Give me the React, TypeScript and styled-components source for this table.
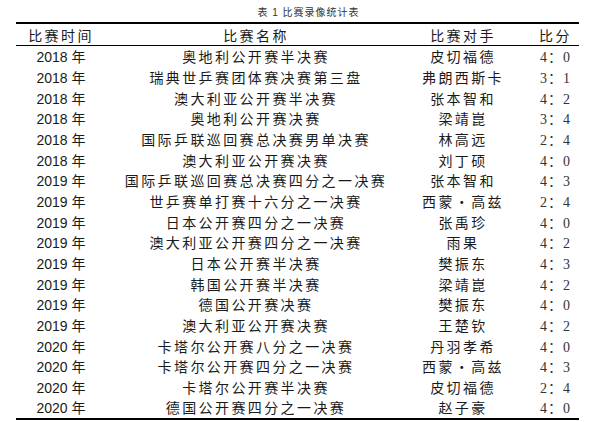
import React from "react";
import styled, { createGlobalStyle } from "styled-components";

const Global = createGlobalStyle`
  html, body { margin: 0; padding: 0; background: #fff; }
  body { font-family: "Liberation Sans", "Noto Sans CJK SC", sans-serif; color: #111; }
`;

const Page = styled.div`
  width: 601px;
  height: 422px;
  padding: 0 22px 0 16px;
  box-sizing: border-box;
`;

const Caption = styled.div`
  height: 22px;
  display: flex;
  align-items: center;
  justify-content: center;
  padding-left: 22px;
  font-family: "Liberation Sans", "Noto Sans CJK SC", sans-serif;
  font-size: 10px;
  letter-spacing: 1px;
  color: #333;
`;

const Table = styled.div`
  border-top: 2px solid #000;
  border-bottom: 2px solid #000;
  display: grid;
  grid-template-columns: 90px 300px 114px 59px;
`;

const Cell = styled.div<{ $head?: boolean; $score?: boolean }>`
  height: ${(p) => (p.$head ? "21px" : "20.67px")};
  display: flex;
  align-items: center;
  justify-content: center;
  padding-left: ${(p) => (p.$score ? "12px" : "0")};
  font-family: ${(p) =>
    p.$score
      ? '"Liberation Serif", "Noto Sans CJK SC", serif'
      : '"Liberation Sans", "Noto Sans CJK SC", sans-serif'};
  font-size: 14px;
  letter-spacing: ${(p) => (p.$score ? "1px" : "2.4px")};
  color: ${(p) => (p.$score ? "#333" : "#1a1a1a")};
  border-bottom: ${(p) => (p.$head ? "1px solid #000" : "none")};
  white-space: nowrap;
`;

const Year = styled.span`
  letter-spacing: 0;
  & > b {
    font-weight: normal;
    margin-left: 4px;
    font-family: "Noto Sans CJK SC", sans-serif;
  }
`;

const rows: [string, string, string, string][] = [
  ["2018", "奥地利公开赛半决赛", "皮切福德", "4：0"],
  ["2018", "瑞典世乒赛团体赛决赛第三盘", "弗朗西斯卡", "3：1"],
  ["2018", "澳大利亚公开赛半决赛", "张本智和", "4：2"],
  ["2018", "奥地利公开赛决赛", "梁靖崑", "3：4"],
  ["2018", "国际乒联巡回赛总决赛男单决赛", "林高远", "2：4"],
  ["2018", "澳大利亚公开赛决赛", "刘丁硕", "4：0"],
  ["2019", "国际乒联巡回赛总决赛四分之一决赛", "张本智和", "4：3"],
  ["2019", "世乒赛单打赛十六分之一决赛", "西蒙・高兹", "2：4"],
  ["2019", "日本公开赛四分之一决赛", "张禹珍", "4：0"],
  ["2019", "澳大利亚公开赛四分之一决赛", "雨果", "4：2"],
  ["2019", "日本公开赛半决赛", "樊振东", "4：3"],
  ["2019", "韩国公开赛半决赛", "梁靖崑", "4：2"],
  ["2019", "德国公开赛决赛", "樊振东", "4：0"],
  ["2019", "澳大利亚公开赛决赛", "王楚钦", "4：2"],
  ["2020", "卡塔尔公开赛八分之一决赛", "丹羽孝希", "4：0"],
  ["2020", "卡塔尔公开赛四分之一决赛", "西蒙・高兹", "4：3"],
  ["2020", "卡塔尔公开赛半决赛", "皮切福德", "2：4"],
  ["2020", "德国公开赛四分之一决赛", "赵子豪", "4：0"],
];

export default function App() {
  return (
    <>
      <Global />
      <Page>
        <Caption>表 1 比赛录像统计表</Caption>
        <Table>
          <Cell $head>比赛时间</Cell>
          <Cell $head>比赛名称</Cell>
          <Cell $head>比赛对手</Cell>
          <Cell $head style={{ paddingLeft: 12 }}>比分</Cell>
          {rows.map((r, i) => (
            <React.Fragment key={i}>
              <Cell>
                <Year>
                  {r[0]}
                  <b>年</b>
                </Year>
              </Cell>
              <Cell>{r[1]}</Cell>
              <Cell>{r[2]}</Cell>
              <Cell $score>{r[3]}</Cell>
            </React.Fragment>
          ))}
        </Table>
      </Page>
    </>
  );
}
